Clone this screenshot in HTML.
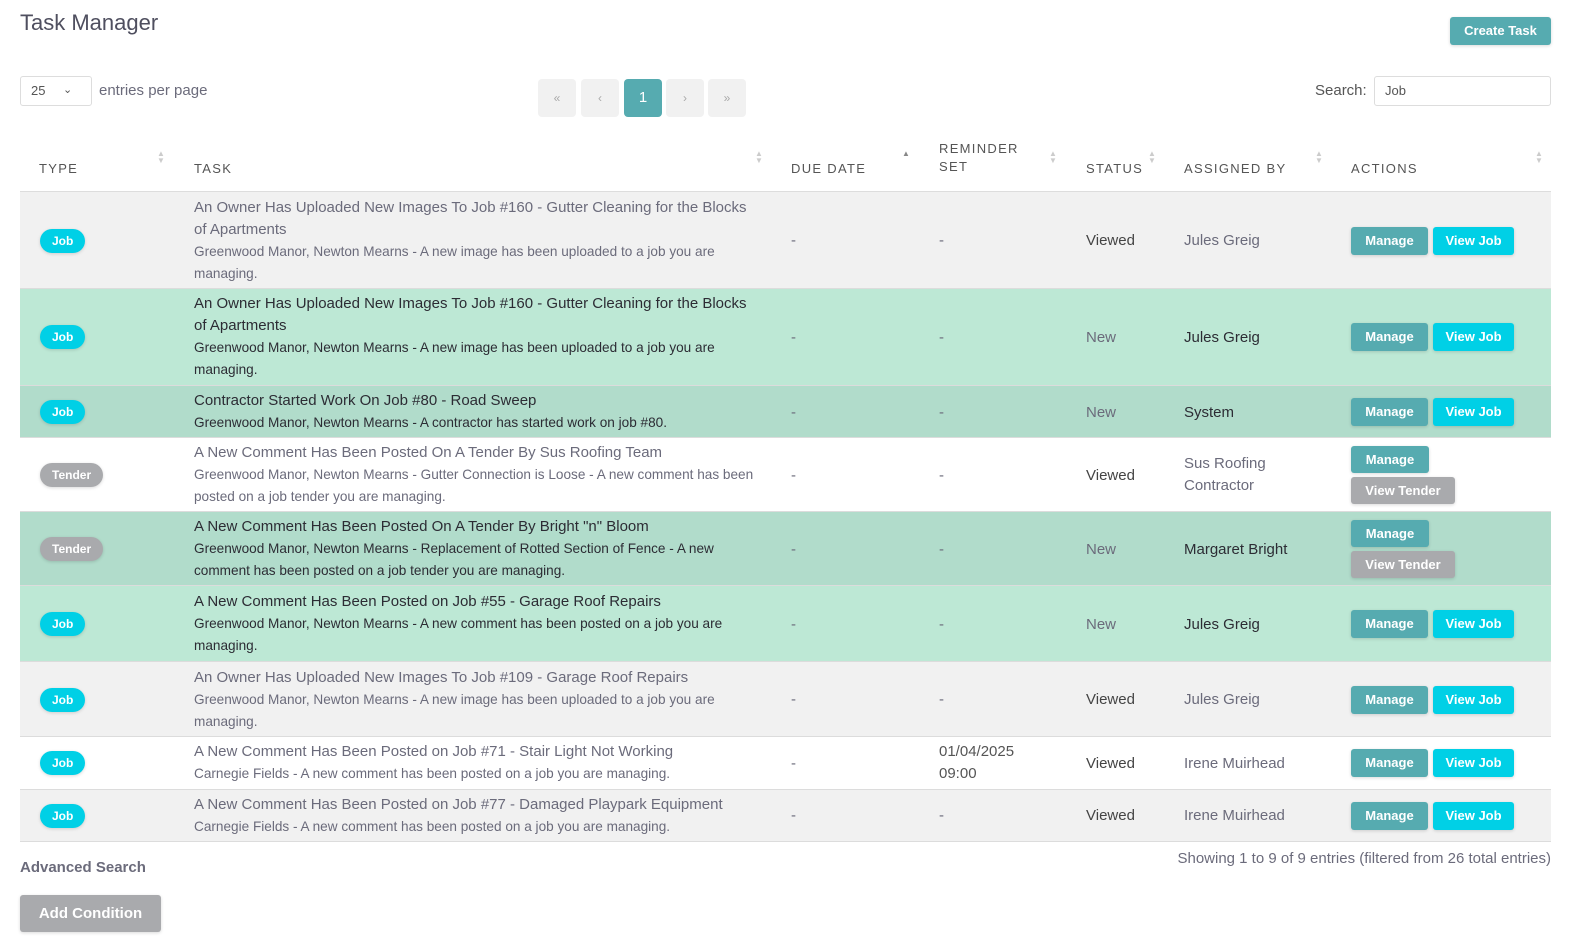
<!DOCTYPE html>
<html><head><meta charset="utf-8"><style>
*{box-sizing:border-box;margin:0;padding:0}
body{width:1580px;height:946px;background:#fff;font-family:"Liberation Sans",sans-serif;color:#6b6b7b;position:relative;overflow:hidden}
.a{position:absolute}
h1{position:absolute;left:20px;top:10px;font-size:22px;font-weight:normal;color:#4f4f5f}
.btn{display:inline-block;color:#fff;font-weight:bold;font-size:13px;border-radius:3px;text-align:center;box-shadow:0 1px 3px rgba(0,0,0,.15)}
.teal{background:#56abb0}.cyan{background:#00d0e6}.gray{background:#a9aaad}
.pg{position:absolute;top:79px;width:38px;height:38px;background:#f1f1f1;border-radius:4px;text-align:center;line-height:38px;font-size:12px;color:#aaa}
.th{position:absolute;top:160px;font-size:13px;letter-spacing:1.3px;color:#555;line-height:18px}
.sa{position:absolute;top:150px;font-size:8px;color:#ccc;line-height:7px}
.row{position:absolute;left:20px;width:1531px;border-top:1px solid #dcdcdc}
.cell{position:absolute;top:0;height:100%;display:flex;align-items:center;font-size:15px}
.badge{display:inline-block;height:24px;line-height:24px;border-radius:12px;color:#fff;font-size:12px;font-weight:bold;padding:0 12px;box-shadow:0 1px 3px rgba(0,0,0,.15)}
.task{width:560px}
.task .t{font-size:15px;line-height:22px}
.task .s{font-size:13.6px;line-height:22px}
.dk{color:#2c2c34}
.vw{color:#444}
</style></head><body>
<h1>Task Manager</h1>
<div class="a btn teal" style="left:1450px;top:17px;width:101px;height:28px;line-height:28px">Create Task</div>
<div class="a" style="left:20px;top:76px;width:72px;height:30px;border:1px solid #ddd;border-radius:3px;font-size:13px;line-height:28px;padding-left:10px;color:#555">25 <span style="position:absolute;left:42px;top:-1px;font-size:11px">&#8964;</span></div>
<div class="a" style="left:99px;top:82px;font-size:15px">entries per page</div>
<div class="pg" style="left:538px">«</div><div class="pg" style="left:581px">‹</div>
<div class="pg" style="left:624px;background:#56abb0;color:#fff;font-size:15px">1</div>
<div class="pg" style="left:666px">›</div><div class="pg" style="left:708px">»</div>
<div class="a" style="left:1315px;top:82px;font-size:15px;color:#555">Search:</div>
<div class="a" style="left:1374px;top:76px;width:177px;height:30px;border:1px solid #ddd;border-radius:3px;font-size:13px;line-height:28px;padding-left:10px;color:#555">Job</div>

<div class="th" style="left:39px">TYPE</div><div class="sa" style="left:157px">▲<br>▼</div>
<div class="th" style="left:194px">TASK</div><div class="sa" style="left:755px">▲<br>▼</div>
<div class="th" style="left:791px">DUE DATE</div><div class="sa" style="left:902px;color:#888">▲<br><span style="color:#fff">▼</span></div>
<div class="th" style="left:939px;top:140px">REMINDER<br>SET</div><div class="sa" style="left:1049px">▲<br>▼</div>
<div class="th" style="left:1086px">STATUS</div><div class="sa" style="left:1148px">▲<br>▼</div>
<div class="th" style="left:1184px">ASSIGNED BY</div><div class="sa" style="left:1315px">▲<br>▼</div>
<div class="th" style="left:1351px">ACTIONS</div><div class="sa" style="left:1535px">▲<br>▼</div>
<div class="a" style="left:20px;top:191px;width:1531px;height:2px;background:#ddd"></div>

<div class="row" style="top:192px;height:97px;background:#f1f1f1;border-top:none">
<div class="cell" style="left:20px"><span class="badge cyan">Job</span></div>
<div class="cell task" style="left:174px"><div><div class="t">An Owner Has Uploaded New Images To Job #160 - Gutter Cleaning for the Blocks of Apartments</div><div class="s">Greenwood Manor, Newton Mearns - A new image has been uploaded to a job you are managing.</div></div></div>
<div class="cell" style="left:771px">-</div><div class="cell" style="left:919px">-</div>
<div class="cell vw" style="left:1066px">Viewed</div><div class="cell" style="left:1164px">Jules Greig</div>
<div class="cell" style="left:1331px"><span class="btn teal" style="width:77px;height:28px;line-height:28px">Manage</span><span class="btn cyan" style="width:81px;height:28px;line-height:28px;margin-left:5px">View Job</span></div></div>

<div class="row dk" style="top:288px;height:97px;background:#bde8d5">
<div class="cell" style="left:20px"><span class="badge cyan">Job</span></div>
<div class="cell task" style="left:174px"><div><div class="t">An Owner Has Uploaded New Images To Job #160 - Gutter Cleaning for the Blocks of Apartments</div><div class="s">Greenwood Manor, Newton Mearns - A new image has been uploaded to a job you are managing.</div></div></div>
<div class="cell" style="left:771px;color:#6b6b7b">-</div><div class="cell" style="left:919px;color:#6b6b7b">-</div>
<div class="cell" style="left:1066px;color:#6b6b7b">New</div><div class="cell" style="left:1164px">Jules Greig</div>
<div class="cell" style="left:1331px"><span class="btn teal" style="width:77px;height:28px;line-height:28px">Manage</span><span class="btn cyan" style="width:81px;height:28px;line-height:28px;margin-left:5px">View Job</span></div></div>

<div class="row dk" style="top:385px;height:53px;background:#b1dccb">
<div class="cell" style="left:20px"><span class="badge cyan">Job</span></div>
<div class="cell task" style="left:174px"><div><div class="t">Contractor Started Work On Job #80 - Road Sweep</div><div class="s">Greenwood Manor, Newton Mearns - A contractor has started work on job #80.</div></div></div>
<div class="cell" style="left:771px;color:#6b6b7b">-</div><div class="cell" style="left:919px;color:#6b6b7b">-</div>
<div class="cell" style="left:1066px;color:#6b6b7b">New</div><div class="cell" style="left:1164px">System</div>
<div class="cell" style="left:1331px"><span class="btn teal" style="width:77px;height:28px;line-height:28px">Manage</span><span class="btn cyan" style="width:81px;height:28px;line-height:28px;margin-left:5px">View Job</span></div></div>

<div class="row" style="top:437px;height:75px;background:#fff">
<div class="cell" style="left:20px"><span class="badge gray">Tender</span></div>
<div class="cell task" style="left:174px"><div><div class="t">A New Comment Has Been Posted On A Tender By Sus Roofing Team</div><div class="s">Greenwood Manor, Newton Mearns - Gutter Connection is Loose - A new comment has been posted on a job tender you are managing.</div></div></div>
<div class="cell" style="left:771px">-</div><div class="cell" style="left:919px">-</div>
<div class="cell vw" style="left:1066px">Viewed</div><div class="cell" style="left:1164px;line-height:22px">Sus Roofing<br>Contractor</div>
<div class="cell" style="left:1331px"><div><span class="btn teal" style="width:78px;height:27px;line-height:27px;display:block">Manage</span><span class="btn gray" style="width:104px;height:27px;line-height:27px;display:block;margin-top:4px">View Tender</span></div></div></div>

<div class="row dk" style="top:511px;height:75px;background:#b1dccb">
<div class="cell" style="left:20px"><span class="badge gray">Tender</span></div>
<div class="cell task" style="left:174px"><div><div class="t">A New Comment Has Been Posted On A Tender By Bright "n" Bloom</div><div class="s">Greenwood Manor, Newton Mearns - Replacement of Rotted Section of Fence - A new comment has been posted on a job tender you are managing.</div></div></div>
<div class="cell" style="left:771px;color:#6b6b7b">-</div><div class="cell" style="left:919px;color:#6b6b7b">-</div>
<div class="cell" style="left:1066px;color:#6b6b7b">New</div><div class="cell" style="left:1164px">Margaret Bright</div>
<div class="cell" style="left:1331px"><div><span class="btn teal" style="width:78px;height:27px;line-height:27px;display:block">Manage</span><span class="btn gray" style="width:104px;height:27px;line-height:27px;display:block;margin-top:4px">View Tender</span></div></div></div>

<div class="row dk" style="top:585px;height:77px;background:#bde8d5">
<div class="cell" style="left:20px"><span class="badge cyan">Job</span></div>
<div class="cell task" style="left:174px"><div><div class="t">A New Comment Has Been Posted on Job #55 - Garage Roof Repairs</div><div class="s">Greenwood Manor, Newton Mearns - A new comment has been posted on a job you are managing.</div></div></div>
<div class="cell" style="left:771px;color:#6b6b7b">-</div><div class="cell" style="left:919px;color:#6b6b7b">-</div>
<div class="cell" style="left:1066px;color:#6b6b7b">New</div><div class="cell" style="left:1164px">Jules Greig</div>
<div class="cell" style="left:1331px"><span class="btn teal" style="width:77px;height:28px;line-height:28px">Manage</span><span class="btn cyan" style="width:81px;height:28px;line-height:28px;margin-left:5px">View Job</span></div></div>

<div class="row" style="top:661px;height:76px;background:#f1f1f1">
<div class="cell" style="left:20px"><span class="badge cyan">Job</span></div>
<div class="cell task" style="left:174px"><div><div class="t">An Owner Has Uploaded New Images To Job #109 - Garage Roof Repairs</div><div class="s">Greenwood Manor, Newton Mearns - A new image has been uploaded to a job you are managing.</div></div></div>
<div class="cell" style="left:771px">-</div><div class="cell" style="left:919px">-</div>
<div class="cell vw" style="left:1066px">Viewed</div><div class="cell" style="left:1164px">Jules Greig</div>
<div class="cell" style="left:1331px"><span class="btn teal" style="width:77px;height:28px;line-height:28px">Manage</span><span class="btn cyan" style="width:81px;height:28px;line-height:28px;margin-left:5px">View Job</span></div></div>

<div class="row" style="top:736px;height:53px;background:#fff">
<div class="cell" style="left:20px"><span class="badge cyan">Job</span></div>
<div class="cell task" style="left:174px"><div><div class="t">A New Comment Has Been Posted on Job #71 - Stair Light Not Working</div><div class="s">Carnegie Fields - A new comment has been posted on a job you are managing.</div></div></div>
<div class="cell" style="left:771px">-</div><div class="cell" style="left:919px;line-height:22px;color:#555">01/04/2025<br>09:00</div>
<div class="cell vw" style="left:1066px">Viewed</div><div class="cell" style="left:1164px">Irene Muirhead</div>
<div class="cell" style="left:1331px"><span class="btn teal" style="width:77px;height:28px;line-height:28px">Manage</span><span class="btn cyan" style="width:81px;height:28px;line-height:28px;margin-left:5px">View Job</span></div></div>

<div class="row" style="top:789px;height:53px;background:#f1f1f1;border-bottom:1px solid #dcdcdc">
<div class="cell" style="left:20px"><span class="badge cyan">Job</span></div>
<div class="cell task" style="left:174px"><div><div class="t">A New Comment Has Been Posted on Job #77 - Damaged Playpark Equipment</div><div class="s">Carnegie Fields - A new comment has been posted on a job you are managing.</div></div></div>
<div class="cell" style="left:771px">-</div><div class="cell" style="left:919px">-</div>
<div class="cell vw" style="left:1066px">Viewed</div><div class="cell" style="left:1164px">Irene Muirhead</div>
<div class="cell" style="left:1331px"><span class="btn teal" style="width:77px;height:28px;line-height:28px">Manage</span><span class="btn cyan" style="width:81px;height:28px;line-height:28px;margin-left:5px">View Job</span></div></div>

<div class="a" style="right:29px;top:850px;font-size:15px">Showing 1 to 9 of 9 entries (filtered from 26 total entries)</div>
<div class="a" style="left:20px;top:859px;font-size:15px;font-weight:bold">Advanced Search</div>
<div class="a btn gray" style="left:20px;top:895px;width:141px;height:37px;line-height:37px;font-size:15px">Add Condition</div>
</body></html>
